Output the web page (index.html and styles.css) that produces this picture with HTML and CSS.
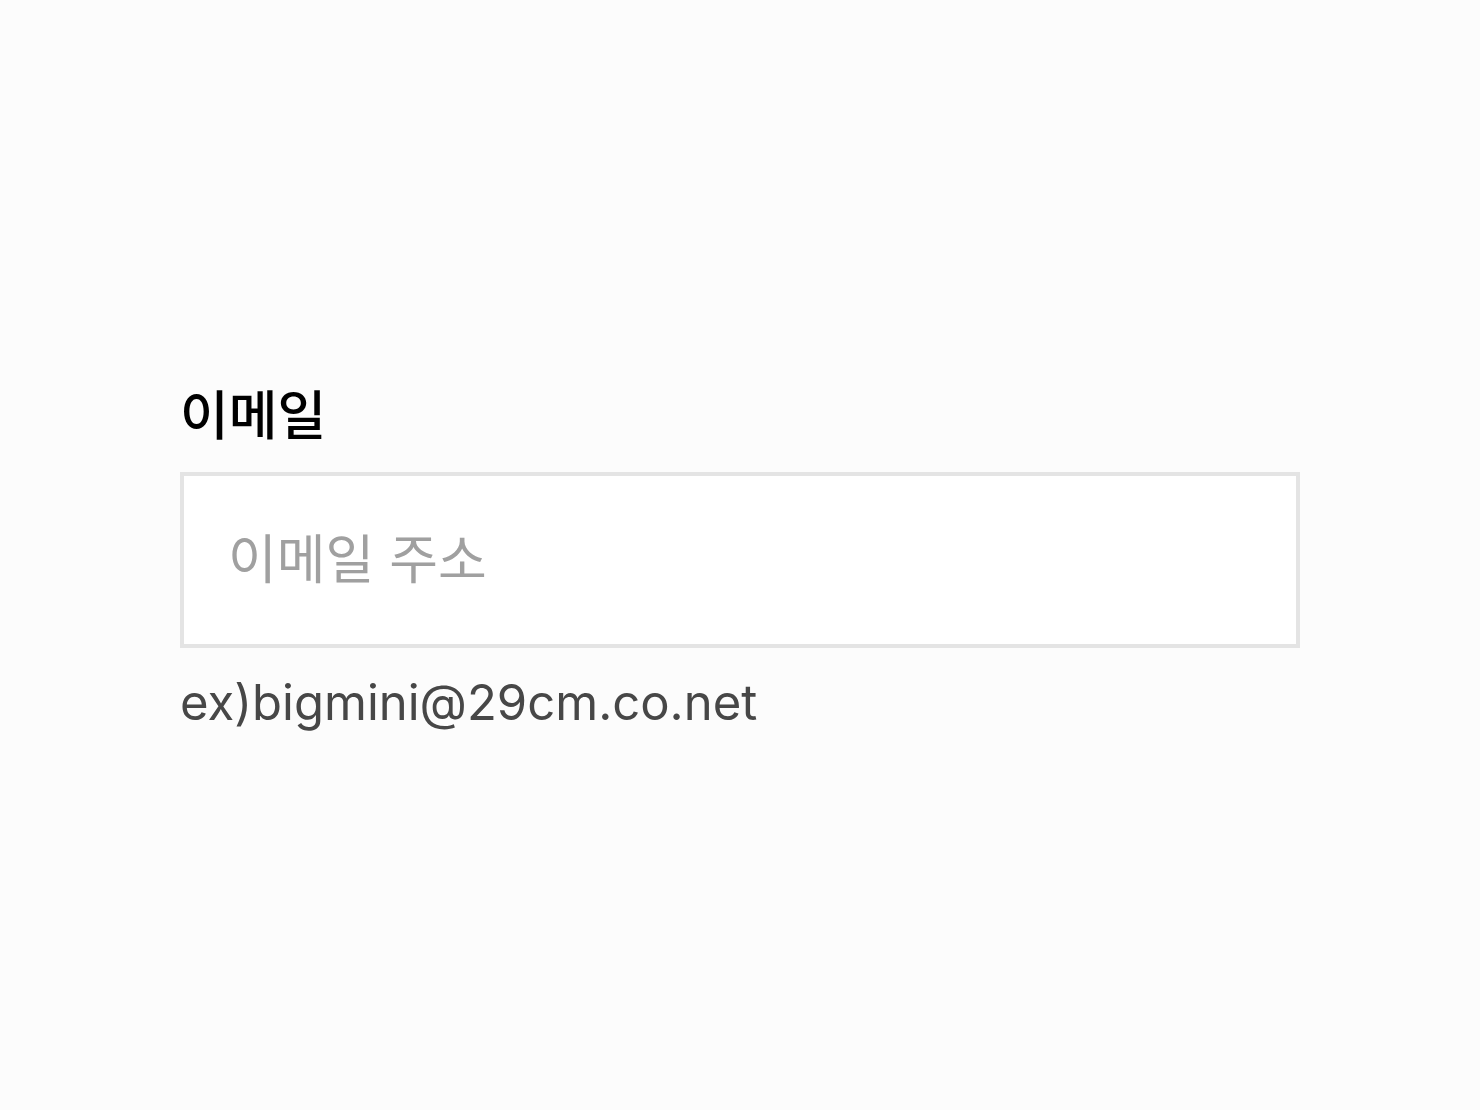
FILE: index.html
```html
<!DOCTYPE html>
<html lang="ko">
<head>
<meta charset="utf-8">
<meta name="viewport" content="width=device-width, initial-scale=1">
<title>이메일</title>
<link rel="stylesheet" href="styles.css">
</head>
<body>
<main class="page">
  <div class="field">
    <label class="field-label" for="email">이메일</label>
    <input class="field-input" id="email" type="email" placeholder="이메일 주소" aria-describedby="email-hint">
    <p class="field-hint" id="email-hint">ex)bigmini@29cm.co.net</p>
  </div>
</main>
</body>
</html>
```
FILE: styles.css
```css
* {
  box-sizing: border-box;
}

body {
  margin: 0;
  background: #fcfcfc;
  font-family: Inter, "Noto Sans CJK KR", sans-serif;
}

.page {
  display: flex;
  align-items: center;
  min-height: 100vh;
  padding: 0 180px;
}

.field {
  display: flex;
  flex-direction: column;
  width: 100%;
}

.field-label {
  margin-bottom: 12px;
  color: #000;
  font-size: 53px;
  font-weight: 500;
  line-height: 88px;
}

.field-input {
  width: 100%;
  height: 176px;
  padding: 0 44px;
  border: 4px solid #e4e4e4;
  border-radius: 0;
  background: #fff;
  color: #000;
  font-family: inherit;
  font-size: 53px;
}

.field-input::placeholder {
  color: #a0a0a0;
  opacity: 1;
}

.field-hint {
  margin: 20px 0 0;
  color: #474747;
  font-size: 49px;
  line-height: 70px;
}
```
